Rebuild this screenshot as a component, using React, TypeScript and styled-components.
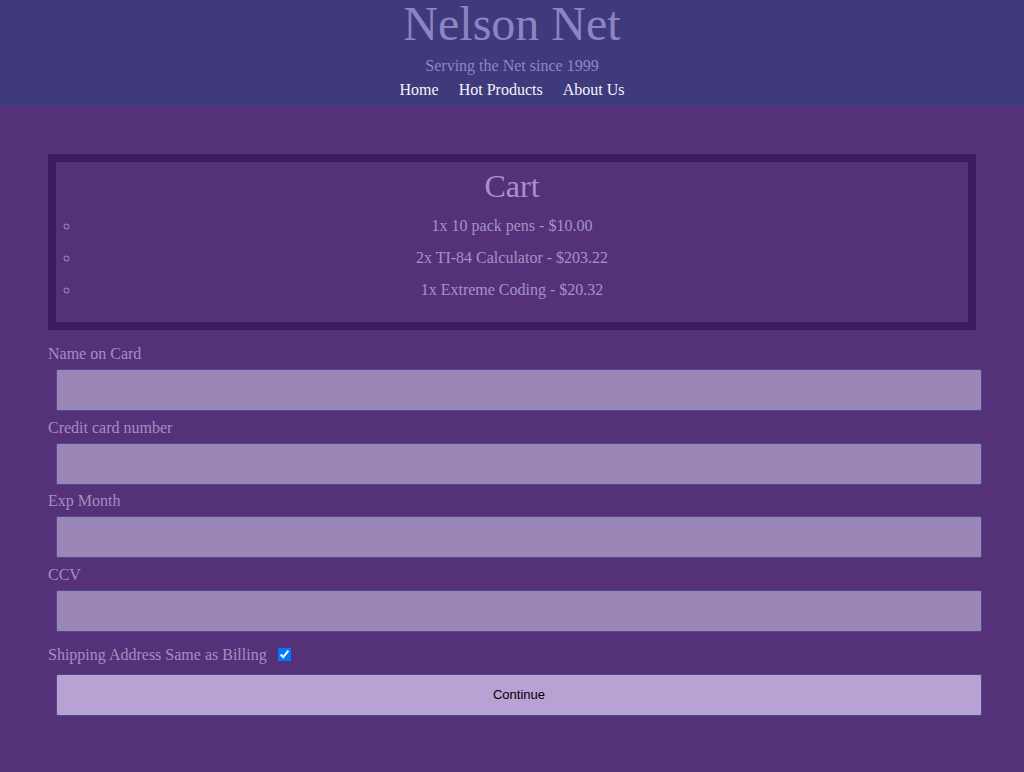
import styled, { createGlobalStyle } from 'styled-components';

const GlobalStyle = createGlobalStyle`
  html, body {
    margin: 0;
    padding: 0;
  }

  body {
    min-height: 772px;
    background: #55317a;
    font-family: 'Liberation Serif', 'Times New Roman', serif;
    font-size: 16px;
  }
`;

const Header = styled.header`
  display: flex;
  flex-direction: column;
  align-items: center;
  padding-bottom: 7px;
  background: #3f3a7c;
`;

const Title = styled.h1`
  margin: 0;
  font-size: 48px;
  font-weight: normal;
  line-height: 48px;
  color: #8b85c1;
`;

const Tagline = styled.p`
  margin: 9px 0 0;
  line-height: 18px;
  color: #8f88bf;
`;

const Nav = styled.nav`
  display: flex;
  gap: 20px;
  margin-top: 6px;
  line-height: 18px;
`;

const NavLink = styled.a`
  color: #f4f2fa;
  text-decoration: none;
`;

const Main = styled.main`
  padding: 48px;
`;

const Cart = styled.section`
  padding: 6px 24px 16px;
  border: 8px solid #3c1b5f;
  text-align: center;
  color: #a692c8;
`;

const CartTitle = styled.h2`
  margin: 0 0 5px;
  font-size: 32px;
  font-weight: normal;
  line-height: 37px;
`;

const Items = styled.ul`
  margin: 0;
  padding: 0;
  list-style: circle;
`;

const Item = styled.li`
  padding: 7px 0;
  line-height: 18px;
`;

const Form = styled.form`
  margin-top: 15px;
`;

const Label = styled.label`
  display: block;
  line-height: 18px;
  color: #a48fc2;
`;

const Input = styled.input`
  display: block;
  box-sizing: border-box;
  width: calc(100% - 2px);
  height: 42px;
  margin: 6px 0 7.5px 8px;
  border: 1px solid #4a4c8e;
  border-radius: 2px;
  background: #9b86b8;
`;

const CheckRow = styled.div`
  display: flex;
  align-items: center;
  margin-top: 14px;
  line-height: 18px;
  color: #a48fc2;
`;

const Check = styled.input`
  width: 13px;
  height: 13px;
  margin: 0 0 0 11px;
`;

const Button = styled.button`
  display: block;
  box-sizing: border-box;
  width: calc(100% - 2px);
  height: 42px;
  margin: 10px 0 0 8px;
  border: 1px solid #4a4c8e;
  border-radius: 2px;
  background: #b8a2d4;
  font-family: 'Liberation Sans', Arial, sans-serif;
  font-size: 13px;
  color: #000;
`;

const cartItems = [
  '1x 10 pack pens - $10.00',
  '2x TI-84 Calculator - $203.22',
  '1x Extreme Coding - $20.32',
];

const fields = ['Name on Card', 'Credit card number', 'Exp Month', 'CCV'];

const App = () => {
  return (
    <>
      <GlobalStyle />
      <Header>
        <Title>Nelson Net</Title>
        <Tagline>Serving the Net since 1999</Tagline>
        <Nav>
          <NavLink href="#">Home</NavLink>
          <NavLink href="#">Hot Products</NavLink>
          <NavLink href="#">About Us</NavLink>
        </Nav>
      </Header>
      <Main>
        <Cart>
          <CartTitle>Cart</CartTitle>
          <Items>
            {cartItems.map((item) => (
              <Item key={item}>{item}</Item>
            ))}
          </Items>
        </Cart>
        <Form onSubmit={(e) => e.preventDefault()}>
          {fields.map((field) => (
            <div key={field}>
              <Label>{field}</Label>
              <Input type="text" />
            </div>
          ))}
          <CheckRow>
            Shipping Address Same as Billing
            <Check type="checkbox" defaultChecked />
          </CheckRow>
          <Button type="submit">Continue</Button>
        </Form>
      </Main>
    </>
  );
};

export default App;
